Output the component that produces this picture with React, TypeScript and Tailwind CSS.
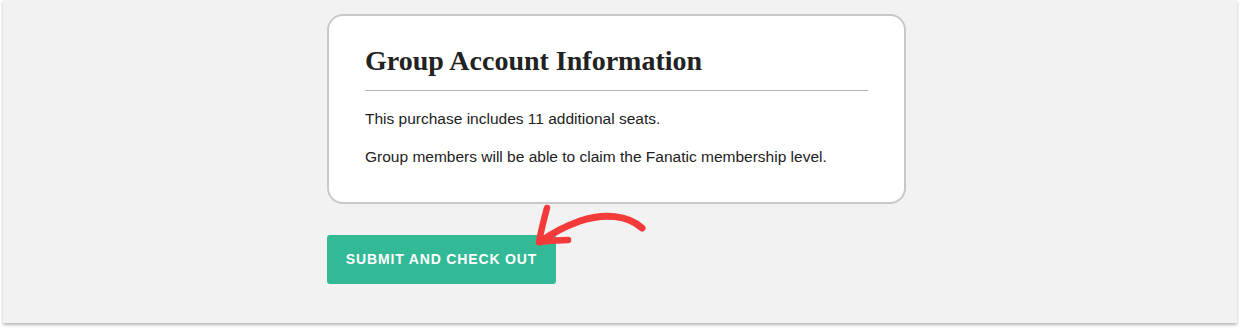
export default function App() {
  return (
    <div className="h-[332px] w-[1240px] bg-white">
      <div className="mx-[3px] h-[323px] bg-[#f2f2f2] pl-[324px] pt-[14px] shadow-[0_2px_3px_rgba(0,0,0,0.28)]">
        <div className="h-[190px] w-[579px] rounded-[16px] border-2 border-[#c8c8c8] bg-white px-[36px] pt-[28px]">
          <h2 className="mb-[12px] font-['Liberation_Serif',serif] text-[28px] leading-[34px] font-bold text-[#222]">
            Group Account Information
          </h2>
          <hr className="border-t border-[#b3b3b3]" />
          <div className="font-['Liberation_Sans',sans-serif] text-[15.5px] leading-[24px] text-[#222]">
            <p className="mt-[16px]">This purchase includes 11 additional seats.</p>
            <p className="mt-[14px]">
              Group members will be able to claim the Fanatic membership level.
            </p>
          </div>
        </div>

        <div className="relative mt-[31px] w-fit">
          <button className="h-[49px] w-[229px] rounded-[3px] bg-[#33b996] font-['Liberation_Sans',sans-serif] text-[14px] font-bold tracking-[0.06em] text-white">
            SUBMIT AND CHECK OUT
          </button>
          {/* red annotation arrow */}
          <svg
            className="absolute top-[-32px] left-[205px]"
            width="120"
            height="50"
            viewBox="0 0 120 50"
            fill="none"
          >
            <path
              d="M110 25 C96 12 72 10 48 18 C34 23 20 30 8 39"
              stroke="#f53a3a"
              strokeWidth="7"
              strokeLinecap="round"
            />
            <path
              d="M15 5 C12 16 9 28 7 39 C17 38 27 37 36 37"
              stroke="#f53a3a"
              strokeWidth="6.5"
              strokeLinecap="round"
              strokeLinejoin="round"
            />
          </svg>
        </div>
      </div>
    </div>
  );
}
